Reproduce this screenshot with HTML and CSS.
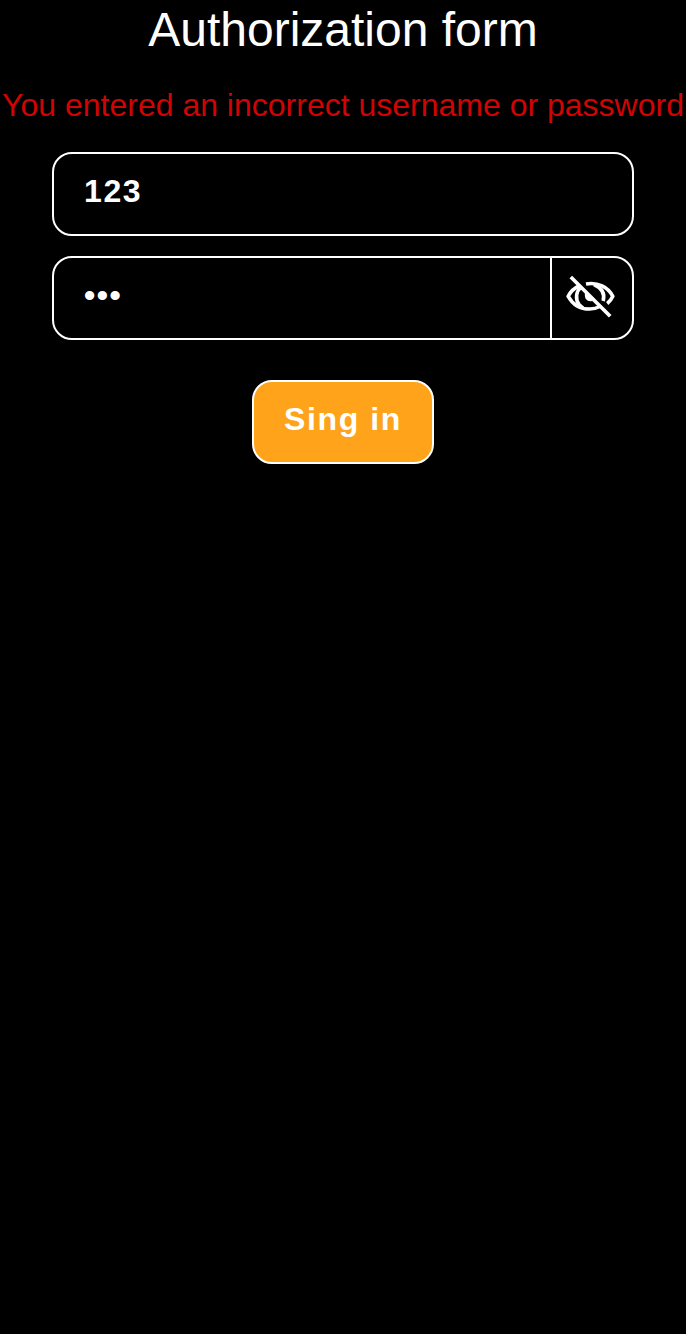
FILE: index.html
```html
<!DOCTYPE html>
<html lang="en">
<head>
<meta charset="utf-8">
<title>Authorization form</title>
<link rel="stylesheet" href="styles.css">
</head>
<body>
<form class="form">
  <h1 class="title">Authorization form</h1>
  <p class="error">You entered an incorrect username or password</p>
  <div class="field"><input class="value" type="text" value="123" aria-label="Username"></div>
  <div class="field">
    <input class="value" type="password" value="123" aria-label="Password">
    <button class="toggle" type="button" aria-label="Show password">
      <svg class="eye" viewBox="0 0 50 50" fill="none" stroke="#fff" stroke-width="3.6">
        <path d="M14 14Q6.500 17.500 3.200 24.300C8 33 15 37 24.500 37Q30 37 35 34.500"/>
        <path d="M21 12C33 10 43 15 47.800 24.300Q46 28.500 42.200 31.500"/>
        <path d="M16 15C11 19.500 10 27 14 32.500L18 36"/>
        <path d="M29 12.500C37 16 40 22 38.200 29"/>
        <path d="M20.500 19C18.500 25 21 29.500 26 29.200Q28.500 29 30.500 27.500Z" fill="#fff" stroke="none"/>
        <path d="M5.800 5L45.200 44.300" stroke-width="3.700"/>
      </svg>
    </button>
  </div>
  <button class="submit" type="button">Sing in</button>
</form>
</body>
</html>
```
FILE: styles.css
```css
* { box-sizing: border-box; }
body {
  margin: 0;
  min-height: 100vh;
  background: #000;
  color: #fff;
  font-family: "Liberation Sans", Arial, sans-serif;
}
.form { display: flex; flex-direction: column; align-items: center; }
.title { margin: 0; font-size: 48px; font-weight: 400; line-height: 60px; }
.error {
  margin: 25px 0 27px;
  font-size: 32px;
  line-height: 40px;
  color: #d00404;
  white-space: nowrap;
}
.field {
  display: flex;
  width: 582px;
  height: 84px;
  margin-bottom: 20px;
  border: 2px solid #fff;
  border-radius: 20px;
}
.value {
  flex: 1;
  min-width: 0;
  padding: 0 0 6px 30px;
  border: 0;
  background: none;
  color: #fff;
  font: 700 32px "Liberation Sans", Arial, sans-serif;
  letter-spacing: 1.6px;
  outline: none;
}
.toggle {
  display: flex;
  width: 82px;
  padding: 14px 0 0 13px;
  border: 0;
  border-left: 2px solid #fff;
  background: none;
}
.eye { width: 50px; height: 50px; }
.submit {
  width: 182px;
  height: 84px;
  margin-top: 20px;
  padding: 0 0 6px;
  border: 2px solid #fff;
  border-radius: 20px;
  background: #ffa31a;
  color: #fff;
  font: 700 32px "Liberation Sans", Arial, sans-serif;
  letter-spacing: 1.6px;
}
```
